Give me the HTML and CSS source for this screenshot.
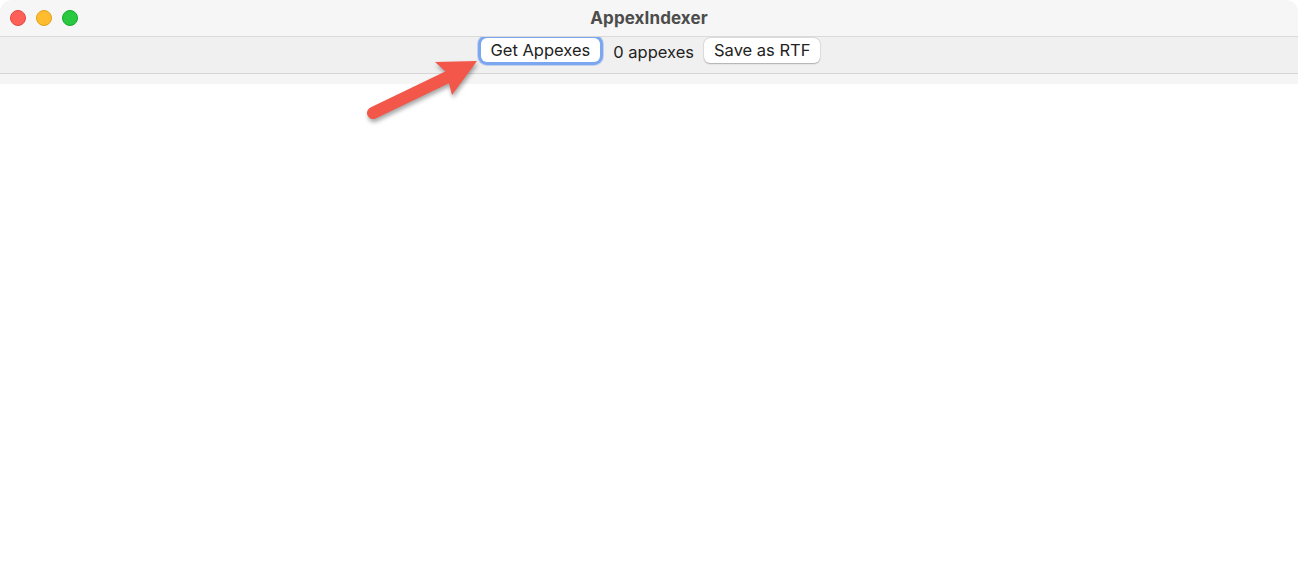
FILE: index.html
```html
<!DOCTYPE html>
<html lang="en">
<head>
    <meta charset="UTF-8">
    <title>AppexIndexer</title>
    <link rel="stylesheet" href="styles.css">
</head>
<body>
    <div class="window">
        <div class="titlebar">
            <div class="lights">
                <span class="light close"></span>
                <span class="light min"></span>
                <span class="light max"></span>
            </div>
            <div class="title">AppexIndexer</div>
        </div>
        <div class="toolbar">
            <button class="btn focused">Get Appexes</button>
            <span class="count">0 appexes</span>
            <button class="btn">Save as RTF</button>
        </div>
        <div class="strip"></div>
        <div class="content"></div>

        <svg class="arrow" width="1298" height="584" viewBox="0 0 1298 584">
            <line x1="373" y1="113" x2="452" y2="75" stroke="#f2574a" stroke-width="12" stroke-linecap="round"/>
            <polygon points="477,61 452,95 446,72 435,62" fill="#f2574a"/>
        </svg>
    </div>
</body>
</html>
```

FILE: styles.css
```css
html, body {
    margin: 0;
    height: 100%;
}
body {
    background-color: #ffffff;
    font-family: "Inter", "Liberation Sans", Arial, sans-serif;
}
.window {
    position: relative;
    height: 584px;
    display: flex;
    flex-direction: column;
    background-color: #fff;
    border-radius: 12px;
    overflow: hidden;
}
.titlebar {
    height: 36px;
    background-color: #f6f6f6;
    border-bottom: 1px solid #dadada;
    display: flex;
    align-items: center;
    justify-content: center;
    position: relative;
}
.lights {
    position: absolute;
    left: 10px;
    top: 10px;
    display: flex;
    gap: 10px;
}
.light {
    width: 16px;
    height: 16px;
    border-radius: 50%;
    box-sizing: border-box;
}
.close {
    background-color: #fe5f57;
    border: 0.5px solid #e2463f;
}
.min {
    background-color: #febc2e;
    border: 0.5px solid #e1a116;
}
.max {
    background-color: #28c840;
    border: 0.5px solid #13a82b;
}
.title {
    font-size: 17px;
    font-weight: 700;
    color: #4c4c4c;
    margin-top: -1px;
    letter-spacing: 0.1px;
}
.toolbar {
    height: 36px;
    background-color: #f0f0f0;
    border-bottom: 1px solid #d6d6d6;
    display: flex;
    align-items: center;
    justify-content: center;
    gap: 10px;
}
.btn {
    font-family: inherit;
    font-size: 16.5px;
    color: #222;
    background-color: #fff;
    border: none;
    border-radius: 6px;
    height: 25px;
    padding: 0 10px;
    margin-top: -10px;
    box-shadow: 0 0.5px 1.5px rgba(0,0,0,0.25), 0 0 0 0.5px rgba(0,0,0,0.08);
}
.btn.focused {
    height: 24px;
    padding: 0 10px;
    margin-left: 3px;
    margin-right: 3px;
    box-shadow: 0 0 0 3px #7ba6f0, 0 0 0 4px rgba(90,140,230,0.3);
}
.count {
    font-size: 16.5px;
    color: #222;
    margin-top: -7px;
}
.strip {
    height: 10px;
    background-color: #f5f5f5;
}
.content {
    flex: 1;
    background-color: #fff;
}
.arrow {
    position: absolute;
    left: 0;
    top: 0;
    pointer-events: none;
    filter: drop-shadow(1px 3px 2px rgba(0,0,0,0.35));
}
```
